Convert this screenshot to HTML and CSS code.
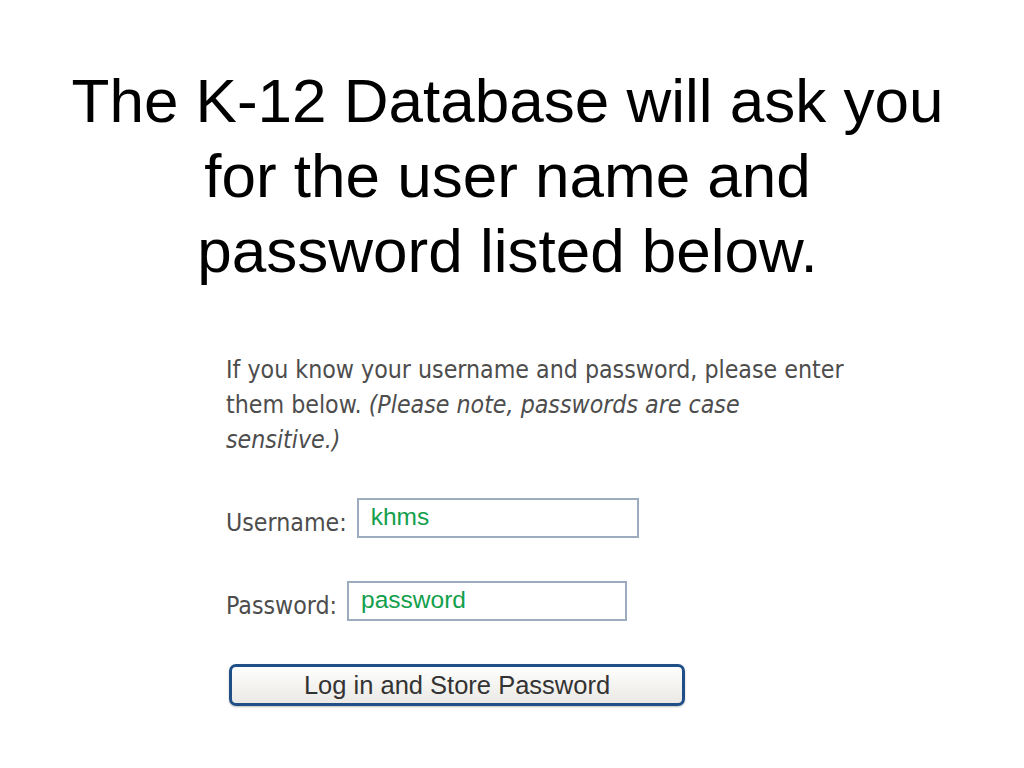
FILE: index.html
```html
<!DOCTYPE html>
<html lang="en">
<head>
    <meta charset="UTF-8">
    <title>K-12 Database Login</title>
    <link rel="stylesheet" href="styles.css">
</head>
<body>
    <h1 class="slide-title">The K-12 Database will ask you<br>for the user name and<br>password listed below.</h1>

    <div class="login-shot">
        <p class="intro">If you know your username and password, please enter them below. <em>(Please note, passwords are case sensitive.)</em></p>

        <div class="field-row user-row">
            <span class="field-label">Username:</span>
            <div class="field-box user-box">khms</div>
        </div>

        <div class="field-row pass-row">
            <span class="field-label">Password:</span>
            <div class="field-box pass-box">password</div>
        </div>

        <button class="login-button">Log in and Store Password</button>
    </div>
</body>
</html>
```

FILE: styles.css
```css
body {
    margin: 0;
    background: #fff;
    width: 1024px;
    height: 768px;
    overflow: hidden;
}

/* Slide heading */
.slide-title {
    margin: 0;
    padding-top: 63px;
    padding-right: 9px;
    font-family: "Liberation Sans", Arial, sans-serif;
    font-weight: normal;
    font-size: 62px;
    line-height: 75px;
    text-align: center;
    color: #000;
}

/* Screenshot of the login form */
.login-shot {
    margin-left: 226px;
    margin-top: 64px;
    width: 625px;
    font-family: "DejaVu Sans Condensed", "DejaVu Sans", sans-serif;
    color: #4d4d4d;
}

.intro {
    margin: 0;
    font-size: 24.7px;
    line-height: 35px;
}

.field-row {
    display: flex;
    align-items: center;
    gap: 10px;
    font-size: 24.7px;
}

.user-row {
    margin-top: 41px;
}

.pass-row {
    margin-top: 43px;
}

.field-label {
    padding-top: 8px;
}

.field-box {
    height: 40px;
    box-sizing: border-box;
    border: 2px solid #9cabbd;
    font-family: "Liberation Sans", Arial, sans-serif;
    font-size: 24.5px;
    line-height: 34px;
    color: #12a04c;
    padding: 0 0 0 12px;
}

.user-box {
    width: 282px;
}

.pass-box {
    width: 280px;
}

.login-button {
    display: block;
    margin-top: 43px;
    margin-left: 3px;
    width: 456px;
    height: 42px;
    border: 3px solid #1f4f86;
    border-radius: 7px;
    background: linear-gradient(#fefefe, #eae9e4);
    box-shadow: 0 1px 2px rgba(0, 0, 0, 0.25);
    font-family: "Liberation Sans", Arial, sans-serif;
    font-size: 25.5px;
    color: #333;
    padding: 0;
}
```
